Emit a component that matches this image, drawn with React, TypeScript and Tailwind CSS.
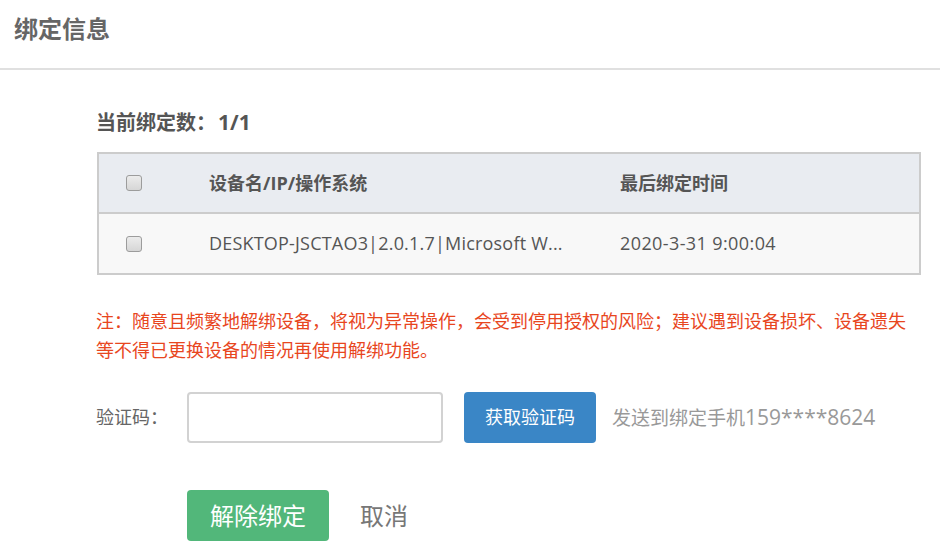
const font = { fontFamily: '"Open Sans", "Noto Sans CJK SC", sans-serif' };

function Box() {
  return (
    <span className="block w-4 h-4 rounded-[3px] border border-[#9c9c9c] bg-gradient-to-b from-[#ececec] to-[#d6d6d6]" />
  );
}

export default function App() {
  return (
    <div className="w-[940px] h-[554px] bg-white overflow-hidden" style={font}>
      <div className="h-[70px] pl-[14px] pt-[14px] border-b-2 border-[#e0e0e0]">
        <h1 className="text-[24px] leading-[30px] font-bold text-[#666]">绑定信息</h1>
      </div>

      <div className="pl-[96px]">
        <p className="mt-[39px] h-[28px] text-[20px] leading-[28px] font-bold text-[#555]">
          当前绑定数：<span className="text-[21px] leading-[20px] pl-[2px]">1/1</span>
        </p>

        <div className="mt-[15px] ml-px w-[824px] border-2 border-[#cccccc] text-[18px] text-[#555]">
          <div className="h-[60px] flex items-center bg-[#e9ecf1] border-b-2 border-[#cccccc] font-bold">
            <div className="w-[110px] pl-[27px]"><Box /></div>
            <div className="w-[411px] truncate">设备名/IP/操作系统</div>
            <div>最后绑定时间</div>
          </div>
          <div className="h-[59px] flex items-center bg-[#f8f8f8]">
            <div className="w-[110px] pl-[27px]"><Box /></div>
            <div className="w-[411px] truncate tracking-[0.2px]">DESKTOP-JSCTAO3|2.0.1.7|Microsoft W...</div>
            <div className="tracking-[0.4px]">2020-3-31 9:00:04</div>
          </div>
        </div>

        <p className="mt-[32px] w-[824px] text-[18px] leading-[29px] text-[#e8461e]">
          注：随意且频繁地解绑设备，将视为异常操作，会受到停用授权的风险；建议遇到设备损坏、设备遗失等不得已更换设备的情况再使用解绑功能。
        </p>

        <div className="mt-[27px] flex items-center h-[51px]">
          <span className="w-[91px] text-[18px] text-[#666]">验证码：</span>
          <input className="w-[256px] h-[51px] rounded-[4px] border-2 border-[#d2d2d2] outline-none px-3" />
          <button className="ml-[21px] w-[132px] h-[51px] rounded-[4px] bg-[#3a86c6] text-white text-[18px]">获取验证码</button>
          <span className="ml-[16px] text-[19px] text-[#999]">
            发送到绑定手机<span className="text-[21px]">159****8624</span>
          </span>
        </div>

        <div className="mt-[47px] ml-[91px] flex items-center">
          <button className="w-[142px] h-[51px] rounded-[4px] bg-[#52b77a] text-white text-[24px]">解除绑定</button>
          <button className="ml-[31px] text-[24px] text-[#777]">取消</button>
        </div>
      </div>
    </div>
  );
}
